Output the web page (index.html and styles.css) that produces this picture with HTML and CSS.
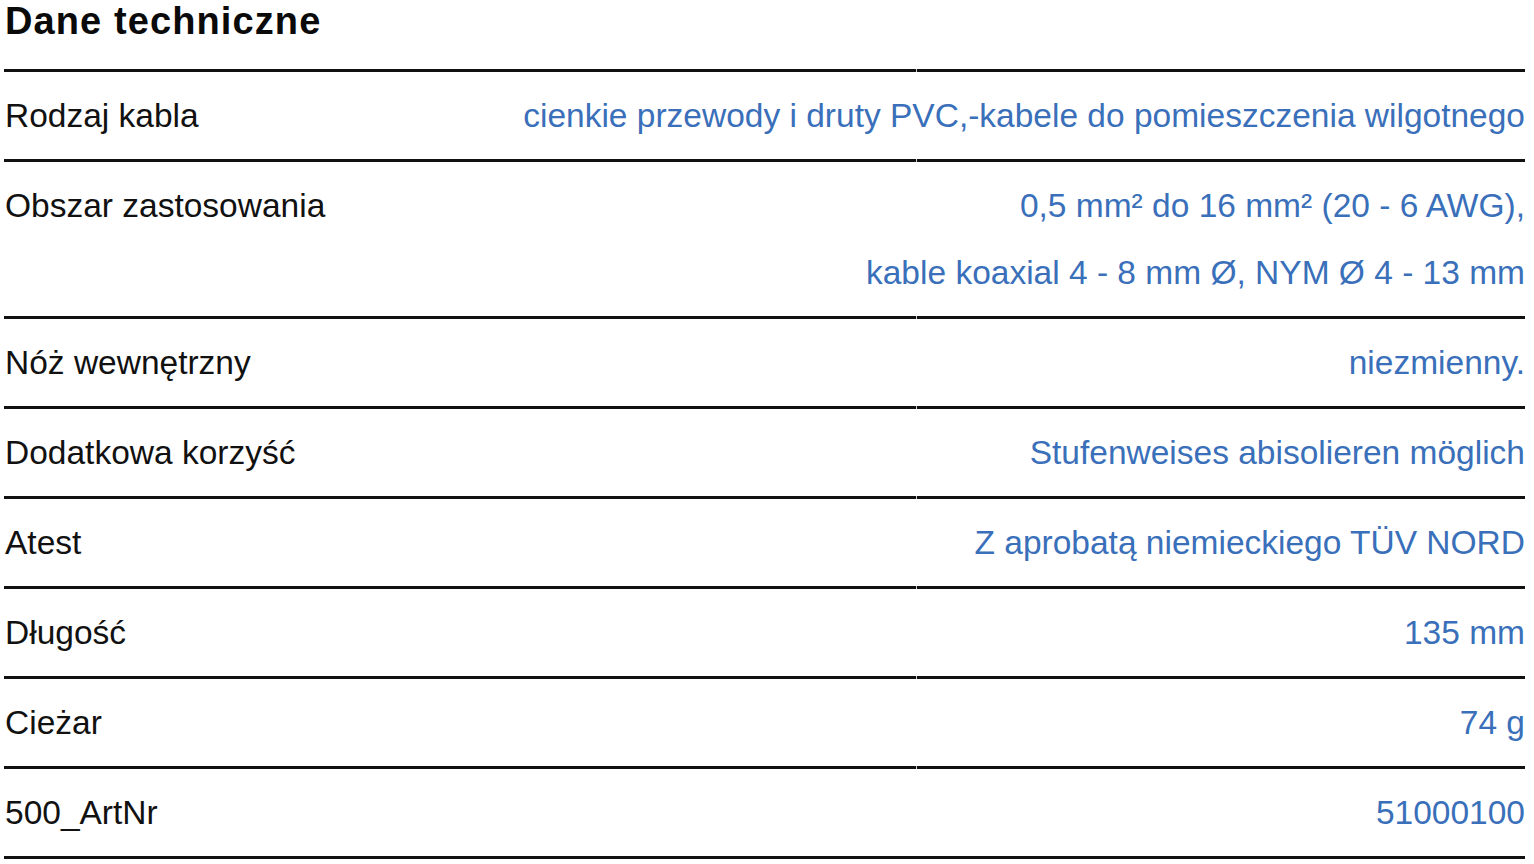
FILE: index.html
```html
<!DOCTYPE html>
<html lang="pl">
<head>
<meta charset="utf-8">
<title>Dane techniczne</title>
<link rel="stylesheet" href="styles.css">
</head>
<body>
<main class="specs">
  <h2 class="specs-title">Dane techniczne</h2>
  <div class="specs-table">
    <div class="row"><div class="label">Rodzaj kabla</div><div class="value">cienkie przewody i druty PVC,-kabele do pomieszczenia wilgotnego</div></div>
    <div class="row"><div class="label">Obszar zastosowania</div><div class="value">0,5 mm² do 16 mm² (20 - 6 AWG),<br>kable koaxial 4 - 8 mm Ø, NYM Ø 4 - 13 mm</div></div>
    <div class="row"><div class="label">Nóż wewnętrzny</div><div class="value">niezmienny.</div></div>
    <div class="row"><div class="label">Dodatkowa korzyść</div><div class="value">Stufenweises abisolieren möglich</div></div>
    <div class="row"><div class="label">Atest</div><div class="value">Z aprobatą niemieckiego TÜV NORD</div></div>
    <div class="row"><div class="label">Długość</div><div class="value">135 mm</div></div>
    <div class="row"><div class="label">Cieżar</div><div class="value">74 g</div></div>
    <div class="row"><div class="label">500_ArtNr</div><div class="value">51000100</div></div>
  </div>
</main>
</body>
</html>
```
FILE: styles.css
```css
html, body {
  margin: 0;
  padding: 0;
  background: #ffffff;
}
body {
  font-family: "Liberation Sans", Arial, sans-serif;
  color: #111111;
}
.specs {
  padding: 0 9px 0 4px;
}
.specs-title {
  margin: 0 0 27px 1px;
  font-size: 38px;
  line-height: 42px;
  font-weight: 700;
  letter-spacing: 1.1px;
  color: #0a0a0a;
}
.specs-table {
  display: flex;
  flex-direction: column;
  border-bottom: 3px solid #111111;
}
.row {
  position: relative;
  display: flex;
  justify-content: space-between;
  gap: 24px;
  border-top: 3px solid #111111;
  padding: 10px 0;
  font-size: 33.5px;
  line-height: 67px;
}
.row::after {
  content: "";
  position: absolute;
  left: 912px;
  top: -3px;
  width: 1px;
  height: 3px;
  background: #cfcfcf;
}
.label {
  flex: 0 0 auto;
  padding-left: 1px;
  white-space: nowrap;
}
.value {
  flex: 1 1 auto;
  text-align: right;
  white-space: nowrap;
  color: #3a6fba;
}
```
